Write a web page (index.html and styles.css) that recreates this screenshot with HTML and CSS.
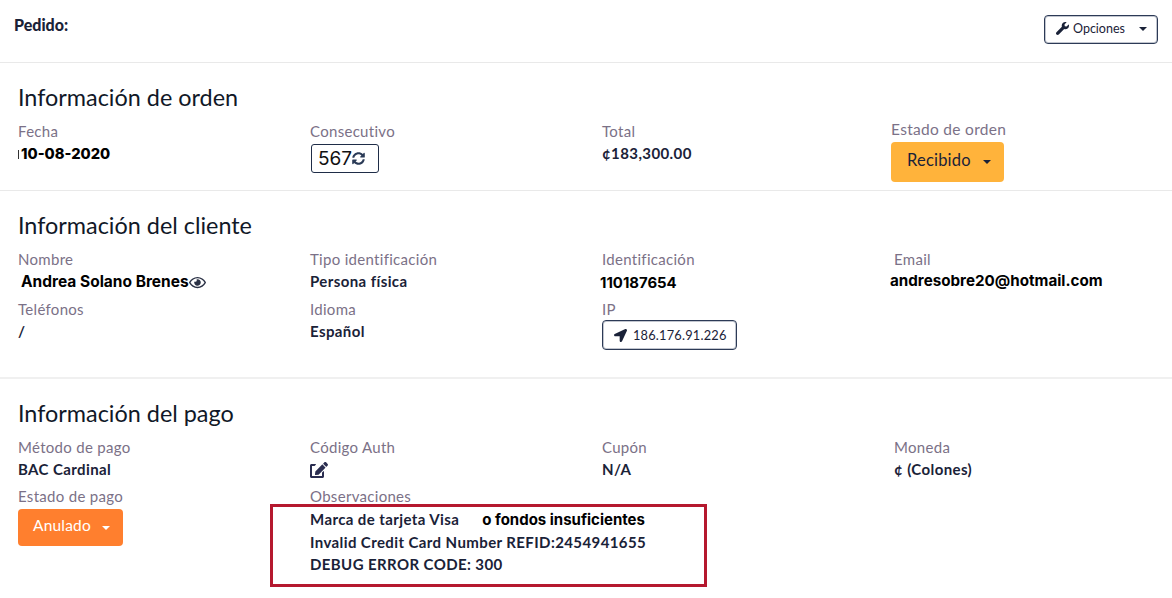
FILE: index.html
```html
<!DOCTYPE html>
<html lang="es">
<head>
<meta charset="utf-8">
<title>Pedido</title>
<link rel="stylesheet" href="styles.css">
</head>
<body>
<div class="page">
  <header class="topbar">
    <strong class="pedido">Pedido:</strong>
    <button class="btn-outline btn-options" type="button">
      <svg class="icon ic-wrench" viewBox="0 0 512 512"><path d="M507.73 109.1c-2.24-9.03-13.54-12.09-20.12-5.51l-74.36 74.36-67.88-11.31-11.31-67.88 74.36-74.36c6.62-6.62 3.43-17.9-5.66-20.16-47.38-11.74-99.55.91-136.58 37.93-39.64 39.64-50.55 97.1-34.05 147.2L18.74 402.76c-24.99 24.99-24.99 65.51 0 90.5 24.99 24.99 65.51 24.99 90.5 0l213.21-213.21c50.12 16.71 107.47 5.68 147.37-34.22 37.07-37.07 49.7-89.32 37.91-136.73z"/></svg>
      <span>Opciones</span>
      <i class="caret caret-options"></i>
    </button>
  </header>

  <section class="section">
    <h2 class="title">Información de orden</h2>
    <div class="grid">
      <div class="cell"><div class="label">Fecha</div><div class="value pasted date">10-08-2020</div></div>
      <div class="cell"><div class="label">Consecutivo</div>
        <div class="consec"><span>567</span><svg class="icon ic-sync" viewBox="0 0 512 512"><path d="M370.72 133.28C339.458 104.008 298.888 87.962 255.848 88c-77.458.068-144.328 53.178-162.791 126.85-1.344 5.363-6.122 9.15-11.651 9.15H24.103c-7.498 0-13.194-6.807-11.807-14.176C33.933 94.924 134.813 8 256 8c66.448 0 126.791 26.136 171.315 68.685L463.03 40.97C478.149 25.851 504 36.559 504 57.941V192c0 13.255-10.745 24-24 24H345.941c-21.382 0-32.09-25.851-16.971-40.971l41.75-41.749zM32 296h134.059c21.382 0 32.09 25.851 16.971 40.971l-41.75 41.75c31.262 29.273 71.835 45.319 114.876 45.28 77.418-.07 144.315-53.144 162.787-126.849 1.344-5.363 6.122-9.15 11.651-9.15h57.304c7.498 0 13.194 6.807 11.807 14.176C478.067 417.076 377.187 504 256 504c-66.448 0-126.791-26.136-171.315-68.685L48.97 471.03C33.851 486.149 8 475.441 8 454.059V320c0-13.255 10.745-24 24-24z"/></svg></div>
      </div>
      <div class="cell"><div class="label">Total</div><div class="value">¢183,300.00</div></div>
      <div class="cell estado">
        <div class="label label-estado">Estado de orden</div>
        <button class="btn-status btn-recibido" type="button"><span>Recibido</span><i class="caret"></i></button>
      </div>
    </div>
  </section>

  <section class="section section-client">
    <h2 class="title">Información del cliente</h2>
    <div class="grid grid-client">
      <div class="cell"><div class="label">Nombre</div><div class="value pasted name">Andrea Solano Brenes<svg class="icon ic-eye" viewBox="0 0 576 512"><path d="M288 144a110.94 110.94 0 0 0-31.24 5 55.4 55.4 0 0 1 7.24 27 56 56 0 0 1-56 56 55.4 55.4 0 0 1-27-7.24A111.71 111.71 0 1 0 288 144zm284.52 97.4C518.29 135.59 410.93 64 288 64S57.68 135.64 3.48 241.41a32.35 32.35 0 0 0 0 29.19C57.71 376.41 165.07 448 288 448s230.32-71.64 284.52-177.41a32.35 32.35 0 0 0 0-29.19zM288 400c-98.65 0-189.09-55-237.93-144C98.91 167 189.34 112 288 112s189.09 55 237.93 144C477.1 345 386.66 400 288 400z"/></svg></div></div>
      <div class="cell"><div class="label">Tipo identificación</div><div class="value">Persona física</div></div>
      <div class="cell"><div class="label">Identificación</div><div class="value pasted ident">110187654</div></div>
      <div class="cell"><div class="label">Email</div><div class="value pasted email">andresobre20@hotmail.com</div></div>
      <div class="cell"><div class="label">Teléfonos</div><div class="value">/</div></div>
      <div class="cell"><div class="label">Idioma</div><div class="value">Español</div></div>
      <div class="cell"><div class="label">IP</div>
        <button class="btn-outline btn-ip" type="button"><svg class="icon ic-arrow" viewBox="0 0 512 512"><path d="M444.52 3.52L28.74 195.42c-47.97 22.39-31.98 92.75 19.19 92.75h175.91v175.91c0 51.17 70.36 67.17 92.75 19.19l191.9-415.78c15.99-38.39-25.59-79.97-63.97-63.97z"/></svg><span>186.176.91.226</span></button>
      </div>
    </div>
  </section>

  <section class="section section-pay">
    <h2 class="title">Información del pago</h2>
    <div class="grid">
      <div class="cell"><div class="label">Método de pago</div><div class="value">BAC Cardinal</div></div>
      <div class="cell"><div class="label">Código Auth</div><div class="value"><svg class="icon ic-edit" viewBox="0 0 576 512"><path d="M402.6 83.2l90.2 90.2c3.8 3.8 3.8 10 0 13.8L274.4 405.6l-92.8 10.3c-12.4 1.4-22.9-9.1-21.5-21.5l10.3-92.8L388.8 83.2c3.8-3.8 10-3.8 13.8 0zm162-22.9l-48.8-48.8c-15.2-15.2-39.9-15.2-55.2 0l-35.4 35.4c-3.8 3.8-3.8 10 0 13.8l90.2 90.2c3.8 3.8 10 3.8 13.8 0l35.4-35.4c15.2-15.3 15.2-40 0-55.2zM384 346.2V448H64V128h73.1c3.2 0 6.2-1.3 8.5-3.5l40-40c7.6-7.6 2.2-20.5-8.5-20.5H48C21.5 64 0 85.5 0 112v352c0 26.5 21.5 48 48 48h352c26.5 0 48-21.5 48-48V306.2c0-10.7-12.9-16-20.5-8.5l-40 40c-2.2 2.3-3.5 5.3-3.5 8.5z"/></svg></div></div>
      <div class="cell"><div class="label">Cupón</div><div class="value">N/A</div></div>
      <div class="cell"><div class="label">Moneda</div><div class="value">¢ (Colones)</div></div>
      <div class="cell"><div class="label">Estado de pago</div>
        <button class="btn-status btn-anulado" type="button"><span>Anulado</span><i class="caret"></i></button>
      </div>
      <div class="cell cell-wide"><div class="label">Observaciones</div>
        <div class="obs">
          <div class="value obs-line">Marca de tarjeta Visa<span class="pasted obs-paste">o fondos insuficientes</span></div>
          <div class="value obs-line">Invalid Credit Card Number REFID:2454941655</div>
          <div class="value obs-line">DEBUG ERROR CODE: 300</div>
        </div>
      </div>
    </div>
    <div class="highlight"></div>
  </section>
</div>
</body>
</html>
```

FILE: styles.css
```css
* { box-sizing: border-box; }
html, body { margin: 0; padding: 0; background: #fff; }
body { font-family: "Lato", "Noto Sans", sans-serif; color: #1a2238; }
.page { width: 1172px; height: 598px; overflow: hidden; position: relative; }

.topbar {
  height: 63px;
  border-bottom: 1px solid #e9e9e9;
  display: flex;
  justify-content: space-between;
  align-items: flex-start;
  padding: 15px 14px 0 14px;
}
.pedido { font-size: 16px; line-height: 20px; font-weight: 900; }

.icon { display: inline-block; fill: currentColor; flex: none; }
.caret {
  display: inline-block;
  width: 0; height: 0;
  border-left: 4px solid transparent;
  border-right: 4px solid transparent;
  border-top: 4px solid currentColor;
}

.btn-outline {
  font-family: inherit;
  background: #fff;
  border: 1px solid #2c3a56;
  box-shadow: inset 0 0 0 1px rgba(52, 67, 96, .3);
  border-radius: 4px;
  color: #1a2238;
  display: flex;
  align-items: center;
  padding: 0;
  margin: 0;
}
.btn-options { width: 114px; height: 29px; font-size: 12.5px; padding: 0 0 2px 11px; }
.ic-wrench { width: 13px; height: 13px; margin-right: 4px; }
.caret-options { margin-left: 14px; }

.section {
  height: 128px;
  padding: 19px 0 0 18px;
  border-bottom: 1px solid #e9e9e9;
  position: relative;
}
.section-client { height: 188px; border-bottom: 2px solid #f0f0f0; }
.section-pay { height: 219px; border-bottom: 0; }

.title {
  margin: 0 0 7px;
  font-size: 23.4px;
  line-height: 31px;
  font-weight: 400;
  color: #111827;
}
.grid { display: grid; grid-template-columns: repeat(4, 292px); row-gap: 5px; }
.grid-client { row-gap: 6px; }
.cell { min-width: 0; }
.cell-wide { grid-column: span 3; }
.label { font-size: 15px; line-height: 22px; color: #7b7187; letter-spacing: .3px; }
.value { font-size: 15px; line-height: 22px; font-weight: 700; color: #1a2238; white-space: nowrap; letter-spacing: .4px; }
.pasted { font-family: "Inter", sans-serif; color: #000; font-weight: 700; letter-spacing: 0; }

.date { font-size: 14.7px; font-weight: 800; padding: 1px 0 0 3px; position: relative; }
.date::before {
  content: "";
  position: absolute;
  left: 0; top: 8px;
  width: 1px; height: 9px;
  background: #333;
}
.name { padding: 1px 0 0 3px; margin-bottom: -1px; display: flex; align-items: center; font-size: 15.5px; }
.ident { margin: 2px 0 -2px -2px; font-size: 14.9px; }
.email { margin-left: -4px; font-size: 15.2px; }
.ic-eye { width: 17px; height: 15px; margin-left: 0; color: #2a3145; }

.consec {
  width: 68px; height: 29px;
  margin: 2px 0 0 1px;
  border: 1px solid #1f2d48;
  border-radius: 3px;
  display: flex;
  align-items: center;
  padding-left: 6px;
  font-family: "Inter", sans-serif;
  font-size: 19px;
  color: #111;
}
.ic-sync { width: 13px; height: 13px; color: #2a3a56; }

.estado { position: relative; margin-top: -2px; margin-left: -3px; }
.estado::after {
  content: "";
  position: absolute;
  left: -8px; top: 60px;
  width: 158px; height: 10px;
  background: #fff;
  z-index: 1;
}
.label-estado { font-size: 15.5px; }
.btn-status {
  font-family: inherit;
  border: 0;
  border-radius: 4px;
  display: flex;
  align-items: center;
  padding: 0;
  margin: 0;
  position: relative;
  z-index: 2;
}
.btn-recibido {
  width: 113px; height: 40px; margin-top: 2px;
  background: #ffb33b; color: #1a2238;
  font-size: 16.5px; letter-spacing: .2px; padding: 0 0 4px 16px;
}
.btn-recibido .caret { margin: 4px 0 0 12px; }
.btn-anulado {
  width: 105px; height: 37px; margin-top: 2px;
  background: #ff7f2e; color: #fff;
  font-size: 15.5px; letter-spacing: .2px; padding: 0 0 5px 15px;
}
.btn-anulado .caret { margin: 5px 0 0 11px; }

.btn-ip { width: 135px; height: 30px; font-size: 12.8px; padding: 0 0 0 11px; letter-spacing: .2px; }
.ic-arrow { width: 13px; height: 13px; margin-right: 6px; }
.ic-edit { width: 18px; height: 16px; vertical-align: -3px; color: #2a2d50; }

.obs { margin-top: 1px; }
.obs-line { line-height: 22.2px; }
.obs-paste { margin-left: 23px; font-size: 15px; }

.highlight {
  position: absolute;
  left: 270px; top: 125px;
  width: 437px; height: 83px;
  border: 3px solid #b5182f;
  pointer-events: none;
}
```
